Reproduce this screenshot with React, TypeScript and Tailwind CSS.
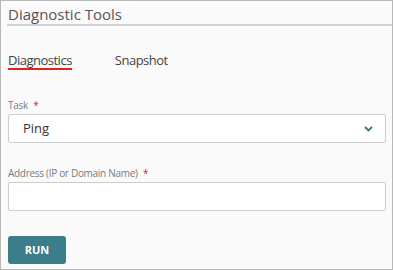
import React from "react";

export default function App() {
  return (
    <div
      className="w-[393px] h-[270px] border border-[#b8b8b8] bg-[#fafafa] box-border overflow-hidden"
      style={{ fontFamily: '"Open Sans", "Liberation Sans", sans-serif' }}
    >
      <div className="pl-[6px]">
        <div className="pt-[3px] h-[25px] border-b-2 border-[#d2d2d2] box-border">
          <div className="text-[15px] leading-[20px] text-[#555555] pl-[1px]">Diagnostic Tools</div>
        </div>
      </div>
      <div className="pl-[7px] pr-[6px]">
        <div className="flex mt-[26px] gap-[43px] text-[13px] tracking-[-0.5px] leading-[16px] text-[#444444]">
          <div className="border-b-2 border-[#e0231f]">Diagnostics</div>
          <div>Snapshot</div>
        </div>
        <div className="mt-[28px] text-[10px] tracking-[-0.3px] leading-[14px] text-[#7a7a7a]">
          Task <span className="text-[#e0231f] ml-[3px]">*</span>
        </div>
        <div className="mt-[2px] h-[29px] border border-[#cccccc] rounded-[2px] bg-white flex items-center justify-between pl-[14px] pr-[12px]">
          <span className="text-[13px] text-[#333333]">Ping</span>
          <svg width="9" height="6" viewBox="0 0 9 6" fill="none">
            <path d="M1 1l3.5 3.5L8 1" stroke="#2f7a86" strokeWidth="1.8" />
          </svg>
        </div>
        <div className="mt-[23px] text-[10px] tracking-[-0.3px] leading-[14px] text-[#7a7a7a]">
          Address (IP or Domain Name) <span className="text-[#e0231f] ml-[3px]">*</span>
        </div>
        <div className="mt-[2px] h-[29px] border border-[#cccccc] rounded-[2px] bg-white" />
        <button className="mt-[25px] w-[58px] h-[28px] rounded-[3px] bg-[#3b7d88] text-white text-[11px] font-bold flex items-center justify-center">
          RUN
        </button>
      </div>
    </div>
  );
}
